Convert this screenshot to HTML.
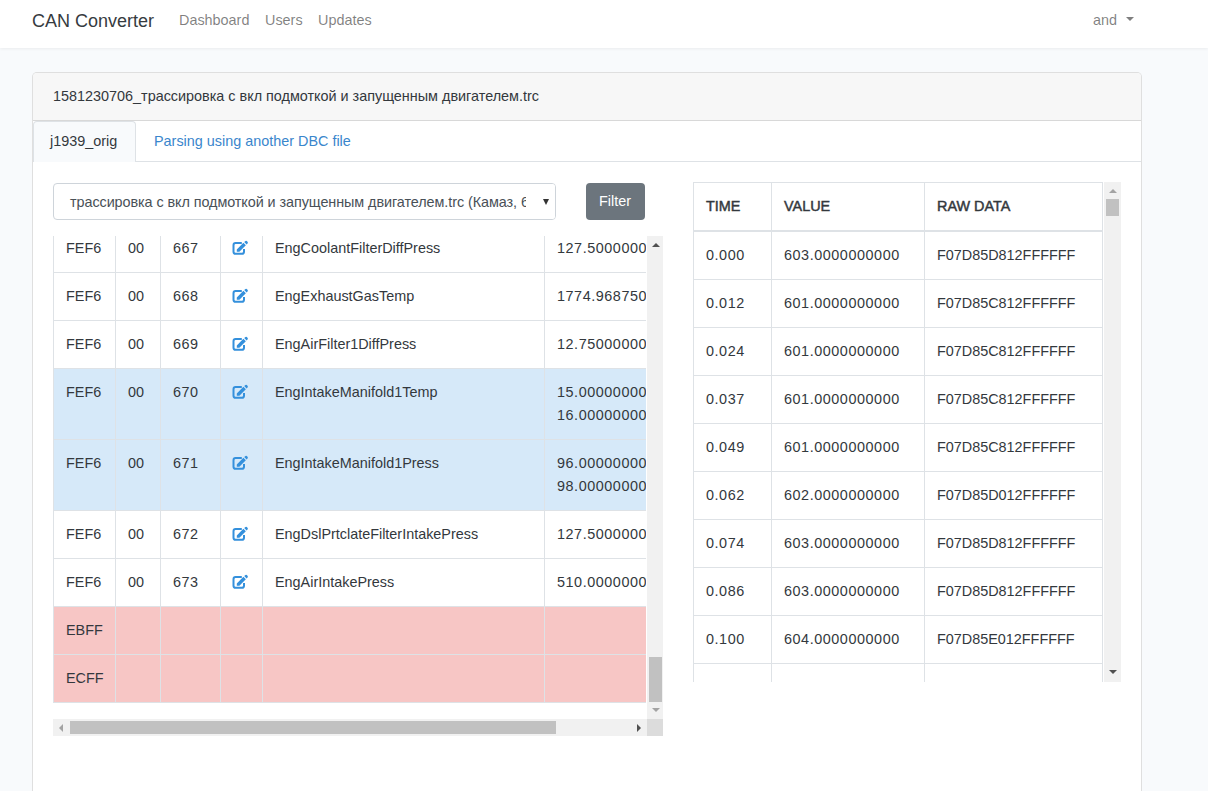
<!DOCTYPE html>
<html><head><meta charset="utf-8">
<style>
*{box-sizing:border-box;}
html,body{margin:0;padding:0;}
body{width:1208px;height:791px;overflow:hidden;background:#f8fafc;font-family:"Liberation Sans",sans-serif;font-size:14.4px;line-height:23px;color:#33383d;position:relative;}
.abs{position:absolute;white-space:nowrap;}
.nav{position:absolute;left:0;top:0;width:1208px;height:48px;background:#fff;box-shadow:0 1px 3px rgba(0,0,0,.06);}
.brand{font-size:18px;color:#363b40;}
.nl{color:rgba(0,0,0,.5);}
.card{position:absolute;left:32px;top:72px;width:1110px;height:760px;background:#fff;border:1px solid rgba(0,0,0,.125);border-radius:5px;}
.chead{position:absolute;left:0;top:0;width:1108px;height:48px;background:#f7f7f7;border-bottom:1px solid rgba(0,0,0,.125);border-radius:4px 4px 0 0;}
.tabsline{position:absolute;left:0;top:88px;width:1108px;height:1px;background:#dee2e6;}
.tab{position:absolute;left:0;top:48px;width:103px;height:41px;background:#f8fafc;border:1px solid #dee2e6;border-bottom:none;border-radius:4px 4px 0 0;}
.link{color:#3a86cc;}
.sel{position:absolute;left:53px;top:183px;width:503px;height:37px;border:1px solid #ced4da;border-radius:4px;background:#fff;overflow:hidden;color:#495057;}
.btn{position:absolute;left:586px;top:183px;width:59px;height:37px;background:#6c757d;border-radius:4px;color:#fff;}
.sc{position:absolute;overflow:hidden;background:#fff;}
.r{position:absolute;left:0;display:flex;border-top:1px solid #dee2e6;}
.c{border-left:1px solid #dee2e6;padding:12px 12px 0 12px;white-space:nowrap;overflow:hidden;flex:none;}
.info{background:#d6e9f9;}
.danger{background:#f7c6c5;}
.ic{display:block;margin-top:4px;}
.track{position:absolute;background:#f1f1f1;}
.thumb{position:absolute;background:#c1c1c1;}
.tri{position:absolute;width:0;height:0;}
</style></head><body>
<div class="nav">
  <div class="abs brand" style="left:32px;top:7px;line-height:28px;">CAN Converter</div>
  <div class="abs nl" style="left:179px;top:9px;">Dashboard</div>
  <div class="abs nl" style="left:265px;top:9px;">Users</div>
  <div class="abs nl" style="left:318px;top:9px;">Updates</div>
  <div class="abs nl" style="left:1093px;top:9px;">and</div>
  <div class="tri" style="left:1125.5px;top:17px;border-left:4.4px solid transparent;border-right:4.4px solid transparent;border-top:4.6px solid rgba(0,0,0,.5);"></div>
</div>

<div class="card">
  <div class="chead"><div class="abs" style="left:20px;top:12px;">1581230706_трассировка с вкл подмоткой и запущенным двигателем.trc</div></div>
  <div class="tabsline"></div>
  <div class="tab"><div class="abs" style="left:16px;top:8px;">j1939_orig</div></div>
  <div class="abs link" style="left:121px;top:57px;">Parsing using another DBC file</div>
</div>

<div class="sel"><div class="abs" style="left:16px;top:7px;letter-spacing:-0.07px;">трассировка с вкл подмоткой и запущенным двигателем.trc (Камаз, 6</div>
  <div class="abs" style="left:472px;top:0;width:30px;height:35px;background:#fff;"></div>
  <div class="tri" style="left:489px;top:15px;border-left:3.5px solid transparent;border-right:3.5px solid transparent;border-top:6px solid #333;"></div>
</div>
<div class="btn"><div class="abs" style="left:13px;top:7px;">Filter</div></div>

<!-- left table scroll container -->
<div class="sc" style="left:53px;top:236px;width:593px;height:483px;">
  <div id="lt" style="position:absolute;left:0;top:-12px;width:682px;"><div class="r " style="top:0px;height:48px;"><div class="c" style="width:62px;">FEF6</div><div class="c" style="width:45px;">00</div><div class="c" style="width:60px;letter-spacing:0.55px;">667</div><div class="c" style="width:42px;"><svg class="ic" width="17" height="15" viewBox="0 0 17 15" style="margin:3px 0 0 -1px"><path d="M9.8 3.1H3.6Q1.5 3.1 1.5 5.2V11.7Q1.5 13.8 3.6 13.8H9.9Q12 13.8 12 11.7V8.9" fill="none" stroke="#3490dc" stroke-width="2"/><path d="M4.8 11.7L4.8 9.4L11.4 2.8L13.85 5.25L7.4 11.7Z M12.2 2.1L12.9 1.4A1.73 1.73 0 0 1 15.35 3.85L14.65 4.55Z" fill="#3490dc"/></svg></div><div class="c" style="width:282px;">EngCoolantFilterDiffPress</div><div class="c" style="width:191px;letter-spacing:0.55px;">127.5000000000</div></div><div class="r " style="top:48px;height:48px;"><div class="c" style="width:62px;">FEF6</div><div class="c" style="width:45px;">00</div><div class="c" style="width:60px;letter-spacing:0.55px;">668</div><div class="c" style="width:42px;"><svg class="ic" width="17" height="15" viewBox="0 0 17 15" style="margin:3px 0 0 -1px"><path d="M9.8 3.1H3.6Q1.5 3.1 1.5 5.2V11.7Q1.5 13.8 3.6 13.8H9.9Q12 13.8 12 11.7V8.9" fill="none" stroke="#3490dc" stroke-width="2"/><path d="M4.8 11.7L4.8 9.4L11.4 2.8L13.85 5.25L7.4 11.7Z M12.2 2.1L12.9 1.4A1.73 1.73 0 0 1 15.35 3.85L14.65 4.55Z" fill="#3490dc"/></svg></div><div class="c" style="width:282px;">EngExhaustGasTemp</div><div class="c" style="width:191px;letter-spacing:0.55px;">1774.968750000</div></div><div class="r " style="top:96px;height:48px;"><div class="c" style="width:62px;">FEF6</div><div class="c" style="width:45px;">00</div><div class="c" style="width:60px;letter-spacing:0.55px;">669</div><div class="c" style="width:42px;"><svg class="ic" width="17" height="15" viewBox="0 0 17 15" style="margin:3px 0 0 -1px"><path d="M9.8 3.1H3.6Q1.5 3.1 1.5 5.2V11.7Q1.5 13.8 3.6 13.8H9.9Q12 13.8 12 11.7V8.9" fill="none" stroke="#3490dc" stroke-width="2"/><path d="M4.8 11.7L4.8 9.4L11.4 2.8L13.85 5.25L7.4 11.7Z M12.2 2.1L12.9 1.4A1.73 1.73 0 0 1 15.35 3.85L14.65 4.55Z" fill="#3490dc"/></svg></div><div class="c" style="width:282px;">EngAirFilter1DiffPress</div><div class="c" style="width:191px;letter-spacing:0.55px;">12.75000000000</div></div><div class="r info" style="top:144px;height:71px;"><div class="c" style="width:62px;">FEF6</div><div class="c" style="width:45px;">00</div><div class="c" style="width:60px;letter-spacing:0.55px;">670</div><div class="c" style="width:42px;"><svg class="ic" width="17" height="15" viewBox="0 0 17 15" style="margin:3px 0 0 -1px"><path d="M9.8 3.1H3.6Q1.5 3.1 1.5 5.2V11.7Q1.5 13.8 3.6 13.8H9.9Q12 13.8 12 11.7V8.9" fill="none" stroke="#3490dc" stroke-width="2"/><path d="M4.8 11.7L4.8 9.4L11.4 2.8L13.85 5.25L7.4 11.7Z M12.2 2.1L12.9 1.4A1.73 1.73 0 0 1 15.35 3.85L14.65 4.55Z" fill="#3490dc"/></svg></div><div class="c" style="width:282px;">EngIntakeManifold1Temp</div><div class="c" style="width:191px;letter-spacing:0.55px;">15.00000000000<br>16.00000000000</div></div><div class="r info" style="top:215px;height:71px;"><div class="c" style="width:62px;">FEF6</div><div class="c" style="width:45px;">00</div><div class="c" style="width:60px;letter-spacing:0.55px;">671</div><div class="c" style="width:42px;"><svg class="ic" width="17" height="15" viewBox="0 0 17 15" style="margin:3px 0 0 -1px"><path d="M9.8 3.1H3.6Q1.5 3.1 1.5 5.2V11.7Q1.5 13.8 3.6 13.8H9.9Q12 13.8 12 11.7V8.9" fill="none" stroke="#3490dc" stroke-width="2"/><path d="M4.8 11.7L4.8 9.4L11.4 2.8L13.85 5.25L7.4 11.7Z M12.2 2.1L12.9 1.4A1.73 1.73 0 0 1 15.35 3.85L14.65 4.55Z" fill="#3490dc"/></svg></div><div class="c" style="width:282px;">EngIntakeManifold1Press</div><div class="c" style="width:191px;letter-spacing:0.55px;">96.00000000000<br>98.00000000000</div></div><div class="r " style="top:286px;height:48px;"><div class="c" style="width:62px;">FEF6</div><div class="c" style="width:45px;">00</div><div class="c" style="width:60px;letter-spacing:0.55px;">672</div><div class="c" style="width:42px;"><svg class="ic" width="17" height="15" viewBox="0 0 17 15" style="margin:3px 0 0 -1px"><path d="M9.8 3.1H3.6Q1.5 3.1 1.5 5.2V11.7Q1.5 13.8 3.6 13.8H9.9Q12 13.8 12 11.7V8.9" fill="none" stroke="#3490dc" stroke-width="2"/><path d="M4.8 11.7L4.8 9.4L11.4 2.8L13.85 5.25L7.4 11.7Z M12.2 2.1L12.9 1.4A1.73 1.73 0 0 1 15.35 3.85L14.65 4.55Z" fill="#3490dc"/></svg></div><div class="c" style="width:282px;">EngDslPrtclateFilterIntakePress</div><div class="c" style="width:191px;letter-spacing:0.55px;">127.5000000000</div></div><div class="r " style="top:334px;height:48px;"><div class="c" style="width:62px;">FEF6</div><div class="c" style="width:45px;">00</div><div class="c" style="width:60px;letter-spacing:0.55px;">673</div><div class="c" style="width:42px;"><svg class="ic" width="17" height="15" viewBox="0 0 17 15" style="margin:3px 0 0 -1px"><path d="M9.8 3.1H3.6Q1.5 3.1 1.5 5.2V11.7Q1.5 13.8 3.6 13.8H9.9Q12 13.8 12 11.7V8.9" fill="none" stroke="#3490dc" stroke-width="2"/><path d="M4.8 11.7L4.8 9.4L11.4 2.8L13.85 5.25L7.4 11.7Z M12.2 2.1L12.9 1.4A1.73 1.73 0 0 1 15.35 3.85L14.65 4.55Z" fill="#3490dc"/></svg></div><div class="c" style="width:282px;">EngAirIntakePress</div><div class="c" style="width:191px;letter-spacing:0.55px;">510.0000000000</div></div><div class="r danger" style="top:382px;height:48px;"><div class="c" style="width:62px;">EBFF</div><div class="c" style="width:45px;"></div><div class="c" style="width:60px;letter-spacing:0.55px;"></div><div class="c" style="width:42px;"></div><div class="c" style="width:282px;"></div><div class="c" style="width:191px;letter-spacing:0.55px;"></div></div><div class="r danger" style="top:430px;height:48px;"><div class="c" style="width:62px;">ECFF</div><div class="c" style="width:45px;"></div><div class="c" style="width:60px;letter-spacing:0.55px;"></div><div class="c" style="width:42px;"></div><div class="c" style="width:282px;"></div><div class="c" style="width:191px;letter-spacing:0.55px;"></div></div><div class="r" style="top:478px;height:1px;width:682px;"></div></div>
</div>
<!-- left vertical scrollbar -->
<div class="track" style="left:647px;top:236px;width:16px;height:483px;"></div>
<div class="thumb" style="left:649px;top:657px;width:13px;height:45px;"></div>
<div class="tri" style="left:652px;top:243px;border-left:4px solid transparent;border-right:4px solid transparent;border-bottom:4px solid #505050;"></div>
<div class="tri" style="left:652px;top:708px;border-left:4px solid transparent;border-right:4px solid transparent;border-top:4px solid #a3a3a3;"></div>
<!-- left horizontal scrollbar -->
<div class="track" style="left:53px;top:719px;width:594px;height:17px;"></div>
<div class="thumb" style="left:70px;top:721px;width:486px;height:13px;"></div>
<div class="tri" style="left:59px;top:724px;border-top:4px solid transparent;border-bottom:4px solid transparent;border-right:4px solid #a3a3a3;"></div>
<div class="tri" style="left:637px;top:724px;border-top:4px solid transparent;border-bottom:4px solid transparent;border-left:4px solid #505050;"></div>
<div class="abs" style="left:647px;top:719px;width:16px;height:17px;background:#dcdcdc;"></div>

<!-- right table scroll container -->
<div class="sc" style="left:693px;top:182px;width:411px;height:500px;">
  <div id="rt" style="position:absolute;left:0;top:0;width:410px;"><div class="r" style="top:0px;height:50px;border-bottom:2px solid #dee2e6;"><div class="c" style="width:78px;font-weight:normal;-webkit-text-stroke:0.45px #33383d;">TIME</div><div class="c" style="width:153px;font-weight:normal;-webkit-text-stroke:0.45px #33383d;">VALUE</div><div class="c" style="width:179px;font-weight:normal;-webkit-text-stroke:0.45px #33383d;border-right:1px solid #dee2e6;">RAW DATA</div></div><div class="r" style="top:49px;height:48px;"><div class="c" style="width:78px;letter-spacing:0.55px;">0.000</div><div class="c" style="width:153px;letter-spacing:0.55px;">603.0000000000</div><div class="c" style="width:179px;border-right:1px solid #dee2e6;">F07D85D812FFFFFF</div></div><div class="r" style="top:97px;height:48px;"><div class="c" style="width:78px;letter-spacing:0.55px;">0.012</div><div class="c" style="width:153px;letter-spacing:0.55px;">601.0000000000</div><div class="c" style="width:179px;border-right:1px solid #dee2e6;">F07D85C812FFFFFF</div></div><div class="r" style="top:145px;height:48px;"><div class="c" style="width:78px;letter-spacing:0.55px;">0.024</div><div class="c" style="width:153px;letter-spacing:0.55px;">601.0000000000</div><div class="c" style="width:179px;border-right:1px solid #dee2e6;">F07D85C812FFFFFF</div></div><div class="r" style="top:193px;height:48px;"><div class="c" style="width:78px;letter-spacing:0.55px;">0.037</div><div class="c" style="width:153px;letter-spacing:0.55px;">601.0000000000</div><div class="c" style="width:179px;border-right:1px solid #dee2e6;">F07D85C812FFFFFF</div></div><div class="r" style="top:241px;height:48px;"><div class="c" style="width:78px;letter-spacing:0.55px;">0.049</div><div class="c" style="width:153px;letter-spacing:0.55px;">601.0000000000</div><div class="c" style="width:179px;border-right:1px solid #dee2e6;">F07D85C812FFFFFF</div></div><div class="r" style="top:289px;height:48px;"><div class="c" style="width:78px;letter-spacing:0.55px;">0.062</div><div class="c" style="width:153px;letter-spacing:0.55px;">602.0000000000</div><div class="c" style="width:179px;border-right:1px solid #dee2e6;">F07D85D012FFFFFF</div></div><div class="r" style="top:337px;height:48px;"><div class="c" style="width:78px;letter-spacing:0.55px;">0.074</div><div class="c" style="width:153px;letter-spacing:0.55px;">603.0000000000</div><div class="c" style="width:179px;border-right:1px solid #dee2e6;">F07D85D812FFFFFF</div></div><div class="r" style="top:385px;height:48px;"><div class="c" style="width:78px;letter-spacing:0.55px;">0.086</div><div class="c" style="width:153px;letter-spacing:0.55px;">603.0000000000</div><div class="c" style="width:179px;border-right:1px solid #dee2e6;">F07D85D812FFFFFF</div></div><div class="r" style="top:433px;height:48px;"><div class="c" style="width:78px;letter-spacing:0.55px;">0.100</div><div class="c" style="width:153px;letter-spacing:0.55px;">604.0000000000</div><div class="c" style="width:179px;border-right:1px solid #dee2e6;">F07D85E012FFFFFF</div></div><div class="r" style="top:481px;height:48px;"><div class="c" style="width:78px;letter-spacing:0.55px;">0.111</div><div class="c" style="width:153px;letter-spacing:0.55px;">604.0000000000</div><div class="c" style="width:179px;border-right:1px solid #dee2e6;">F07D85E012FFFFFF</div></div></div>
</div>
<div class="track" style="left:1104px;top:182px;width:17px;height:500px;"></div>
<div class="thumb" style="left:1106px;top:199px;width:13px;height:17px;"></div>
<div class="tri" style="left:1109px;top:189px;border-left:4px solid transparent;border-right:4px solid transparent;border-bottom:4px solid #a3a3a3;"></div>
<div class="tri" style="left:1109px;top:670px;border-left:4px solid transparent;border-right:4px solid transparent;border-top:4px solid #505050;"></div>
</body></html>
